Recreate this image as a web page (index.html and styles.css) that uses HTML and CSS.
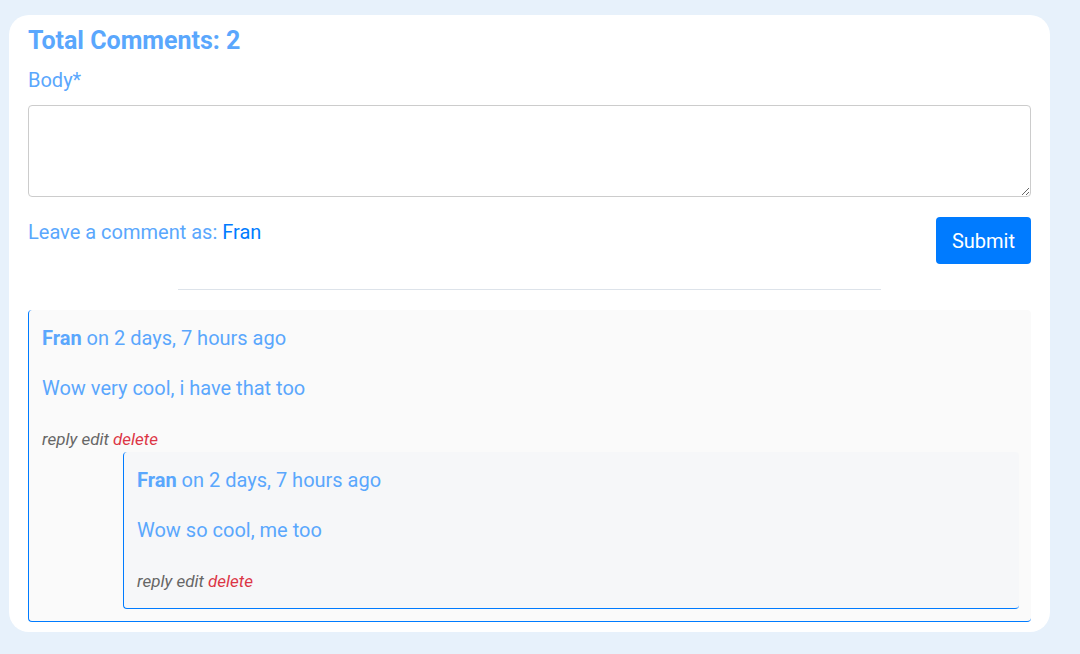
FILE: index.html
```html
<!DOCTYPE html>
<html>
<head>
<meta charset="utf-8">
<link rel="stylesheet" href="styles.css">
</head>
<body>
<div class="card">
  <h2 class="title">Total Comments: 2</h2>
  <form class="form">
    <label class="label">Body*</label>
    <textarea class="body-input"></textarea>
    <div class="form-row">
      <span class="as">Leave a comment as: <span class="user">Fran</span></span>
      <button type="button" class="submit">Submit</button>
    </div>
  </form>
  <hr class="divider">
  <div class="comment">
    <div class="meta"><b>Fran</b> on 2 days, 7 hours ago</div>
    <div class="text">Wow very cool, i have that too</div>
    <div class="actions">reply edit <span class="del">delete</span></div>
    <div class="comment nested">
      <div class="meta"><b>Fran</b> on 2 days, 7 hours ago</div>
      <div class="text">Wow so cool, me too</div>
      <div class="actions">reply edit <span class="del">delete</span></div>
    </div>
  </div>
</div>
</body>
</html>
```
FILE: styles.css
```css
html, body {
  margin: 0;
  padding: 0;
}
body {
  background: #e7f1fb;
  font-family: Roboto, "Liberation Sans", sans-serif;
  color: #5aa7fd;
  padding: 15px 30px 22px 9px;
}
.card {
  background: #fff;
  border-radius: 20px;
  padding: 12px 19px 10px 19px;
  width: 1003px;
}
.title {
  margin: 0;
  font-size: 25px;
  font-weight: 700;
  line-height: 28px;
}
.form {
  margin-top: 13px;
}
.label {
  display: block;
  font-size: 20px;
  line-height: 24px;
}
.body-input {
  display: block;
  box-sizing: border-box;
  width: 100%;
  height: 92px;
  margin-top: 13px;
  border: 1px solid #ccc;
  border-radius: 4px;
  resize: vertical;
}
.form-row {
  display: flex;
  justify-content: space-between;
  align-items: flex-start;
  margin-top: 20px;
}
.as {
  font-size: 20px;
  line-height: 24px;
  padding-top: 3px;
}
.user {
  color: #007bff;
}
.submit {
  background: #007bff;
  color: #fff;
  border: none;
  border-radius: 4px;
  font-family: Roboto, "Liberation Sans", sans-serif;
  font-size: 20px;
  height: 47px;
  padding: 0 16px;
}
.divider {
  width: 70%;
  margin: 25px auto 20px;
  border: none;
  border-top: 1px solid #dde3ea;
}
.comment {
  background: #fafafa;
  border-left: 1px solid #007bff;
  border-bottom: 1px solid #007bff;
  border-radius: 4px;
  padding: 13px 12px 12px 13px;
}
.nested {
  background: #f6f7f9;
  margin-left: 81px;
  padding-bottom: 16px;
}
.meta {
  font-size: 20px;
  line-height: 30px;
}
.meta b {
  font-weight: 700;
}
.text {
  font-size: 20px;
  line-height: 30px;
  margin-top: 20px;
}
.actions {
  margin-top: 25px;
  font-size: 17px;
  line-height: 22px;
  font-style: italic;
  color: #666;
}
.del {
  color: #dc3545;
}
.nested .actions {
  margin-top: 25px;
}
.comment > .nested {
  margin-top: 2px;
}
```
